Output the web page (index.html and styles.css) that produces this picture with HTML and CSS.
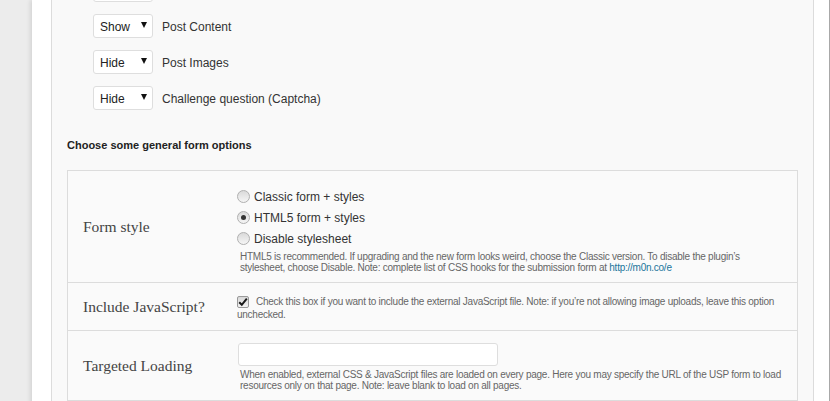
FILE: index.html
```html
<!DOCTYPE html>
<html>
<head>
<meta charset="utf-8">
<link rel="stylesheet" href="styles.css">
</head>
<body>
<div class="page">
  <div class="gutter"></div>
  <div class="wrap">
    <div class="panel">
      <div class="options">
        <div class="opt"><div class="select"><span class="sel-text">Show</span><span class="arrow"></span></div><span class="opt-label">Post Title</span></div>
        <div class="opt"><div class="select"><span class="sel-text">Show</span><span class="arrow"></span></div><span class="opt-label">Post Content</span></div>
        <div class="opt"><div class="select"><span class="sel-text">Hide</span><span class="arrow"></span></div><span class="opt-label">Post Images</span></div>
        <div class="opt"><div class="select"><span class="sel-text">Hide</span><span class="arrow"></span></div><span class="opt-label">Challenge question (Captcha)</span></div>
      </div>
      <h3 class="heading">Choose some general form options</h3>
      <div class="table">
        <div class="row row-style">
          <div class="label">Form style</div>
          <div class="field">
            <div class="radios">
              <div class="radio-line"><span class="radio"></span><span>Classic form + styles</span></div>
              <div class="radio-line"><span class="radio checked"></span><span>HTML5 form + styles</span></div>
              <div class="radio-line"><span class="radio"></span><span>Disable stylesheet</span></div>
            </div>
            <p class="desc">HTML5 is recommended. If upgrading and the new form looks weird, choose the Classic version. To disable the plugin’s stylesheet, choose Disable. Note: complete list of CSS hooks for the submission form at <a class="link" href="#">http://m0n.co/e</a></p>
          </div>
        </div>
        <div class="row row-js">
          <div class="label">Include JavaScript?</div>
          <div class="field">
            <p class="check-text"><span class="checkbox"><svg width="10" height="10" viewBox="0 0 10 10"><path d="M1.2 5.2 L3.8 7.8 L8.8 1.6" fill="none" stroke="#1a1a1a" stroke-width="2"/></svg></span>Check this box if you want to include the external JavaScript file. Note: if you’re not allowing image uploads, leave this option unchecked.</p>
          </div>
        </div>
        <div class="row row-load">
          <div class="label">Targeted Loading</div>
          <div class="field">
            <div class="text-input"></div>
            <p class="desc">When enabled, external CSS &amp; JavaScript files are loaded on every page. Here you may specify the URL of the USP form to load resources only on that page. Note: leave blank to load on all pages.</p>
          </div>
        </div>
      </div>
    </div>
  </div>
</div>
</body>
</html>
```
FILE: styles.css
```css
html, body {
  margin: 0;
  padding: 0;
}
body {
  background: #ececec;
  font-family: "Liberation Sans", Arial, sans-serif;
  color: #333;
  overflow: hidden;
}
.page {
  display: flex;
  min-height: 401px;
}
.gutter {
  width: 32px;
  flex: none;
}
.wrap {
  flex: 1;
  background: #fff;
  padding: 0 15px 0 19px;
  border-right: 1px solid #a8a8a8;
  box-shadow: -2px 0 4px rgba(0, 0, 0, 0.1);
}
.panel {
  background: #f9f9f9;
  border-left: 1px solid #dcdcdc;
  border-right: 1px solid #dcdcdc;
  padding: 0 15px 40px;
  min-height: 401px;
  box-sizing: border-box;
}
.options {
  margin-top: -22px;
  padding-left: 26px;
  display: flex;
  flex-direction: column;
  gap: 12px;
}
.opt {
  display: flex;
  align-items: center;
  gap: 9px;
  font-size: 12px;
  color: #333;
}
.opt-label {
  padding-top: 1px;
}
.select {
  width: 60px;
  height: 24px;
  box-sizing: border-box;
  border: 1px solid #dedede;
  border-radius: 3px;
  background: #fff;
  display: flex;
  align-items: center;
  justify-content: space-between;
  padding: 1px 5px 0 6px;
  font-size: 12px;
  color: #222;
}
.arrow {
  width: 0;
  height: 0;
  border-left: 3px solid transparent;
  border-right: 3px solid transparent;
  border-top: 6px solid #111;
  margin-top: -3px;
}
.heading {
  margin: 28px 0 0;
  font-size: 11px;
  line-height: 14px;
  font-weight: bold;
  color: #222;
}
.table {
  margin-top: 18px;
  border: 1px solid #dcdcdc;
  background: #fafafa;
}
.row {
  display: grid;
  grid-template-columns: 169px 1fr;
  border-bottom: 1px solid #dcdcdc;
}
.label {
  align-self: center;
  padding-left: 15px;
  font-family: "Liberation Serif", Georgia, serif;
  font-size: 15.5px;
  color: #444;
}
.field {
  padding-right: 10px;
}
.row-style .field {
  padding-top: 15px;
  padding-bottom: 9px;
}
.radios {
  display: flex;
  flex-direction: column;
}
.radio-line {
  display: flex;
  align-items: center;
  gap: 4px;
  height: 21px;
  font-size: 12px;
  color: #333;
}
.radio {
  width: 13px;
  height: 13px;
  box-sizing: border-box;
  border-radius: 50%;
  border: 1px solid #b0b0b0;
  background: linear-gradient(#dadada, #f5f5f5);
  display: flex;
  align-items: center;
  justify-content: center;
}
.radio.checked::after {
  content: "";
  width: 5px;
  height: 5px;
  border-radius: 50%;
  background: #333;
}
.desc {
  margin: 2px 0 0;
  padding-left: 3px;
  font-size: 10px;
  letter-spacing: -0.25px;
  line-height: 11px;
  color: #666;
}
.link {
  color: #21759b;
  text-decoration: none;
}
.row-js .field {
  padding-top: 12px;
  padding-bottom: 9px;
}
.check-text {
  margin: 0;
  font-size: 10px;
  letter-spacing: -0.25px;
  line-height: 13px;
  color: #666;
}
.checkbox {
  display: inline-flex;
  align-items: center;
  justify-content: center;
  width: 12px;
  height: 12px;
  box-sizing: border-box;
  border: 1px solid #9a9a9a;
  border-radius: 2px;
  background: linear-gradient(#d8d8d8, #f3f3f3);
  vertical-align: -2px;
  margin-right: 7px;
}
.row-load .field {
  padding-top: 12px;
  padding-bottom: 9px;
}
.text-input {
  width: 260px;
  height: 23px;
  box-sizing: border-box;
  margin-left: 1px;
  border: 1px solid #dedede;
  border-radius: 3px;
  background: #fff;
}
.row-load .desc {
  margin-top: 3px;
}
```
